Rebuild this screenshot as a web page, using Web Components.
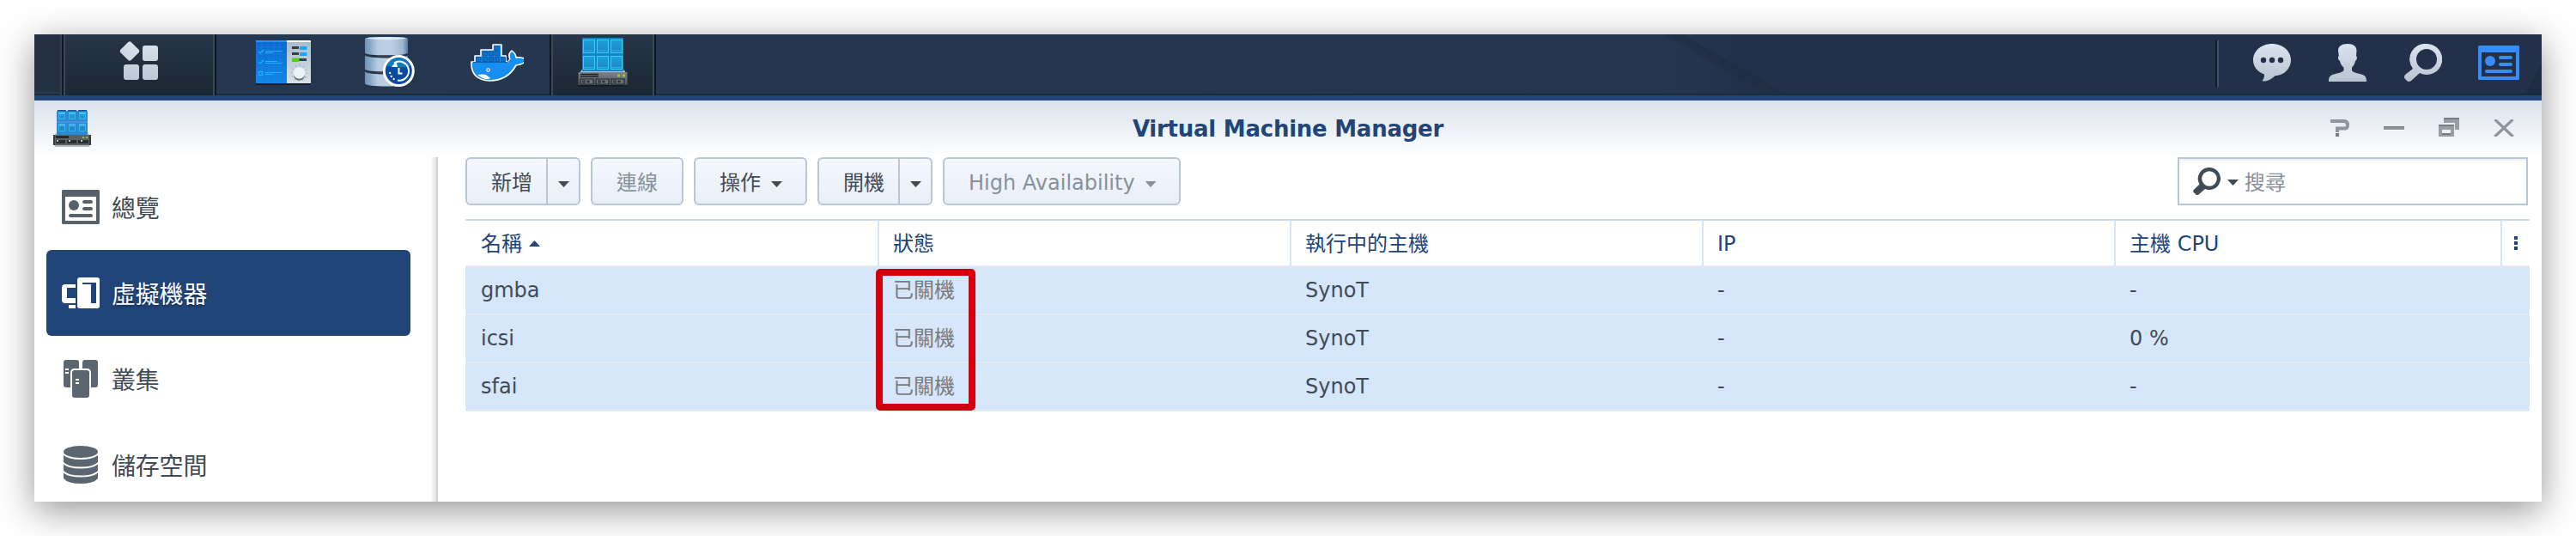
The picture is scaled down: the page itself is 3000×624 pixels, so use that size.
<!DOCTYPE html>
<html lang="zh-Hant">
<head>
<meta charset="utf-8">
<title>Virtual Machine Manager</title>
<style>
html,body{margin:0;height:624px;overflow:hidden;background:#fff}
body{font-family:"DejaVu Sans","Noto Sans CJK TC",sans-serif;font-size:24px;color:#414b55}
</style>
</head>
<body>
<vm-desktop></vm-desktop>
<script>
const cubes = `<linearGradient id="c" x2="0" y2="1"><stop stop-color="#1c9fdd"/><stop offset="1" stop-color="#2186c4"/></linearGradient>`;
const ICONS = {
  grid: [46, 46, `<defs><linearGradient id="g" gradientUnits="userSpaceOnUse" x1="0" y1="0" x2="0" y2="46"><stop stop-color="#dae4f0"/><stop offset="1" stop-color="#bcc7d4"/></linearGradient></defs>
    <g fill="url(#g)"><rect x="4.3" y="2.8" width="17.4" height="17.4" rx="2.8" transform="rotate(45 13 11.5)"/><rect x="28" y="5" width="18" height="18" rx="3"/><rect x="6" y="27" width="18" height="18" rx="3"/><rect x="28" y="27" width="18" height="18" rx="3"/></g>`],
  panel: [64, 52, `<defs><linearGradient id="b" x2="0" y2="1"><stop stop-color="#0b68cf"/><stop offset="1" stop-color="#1387e6"/></linearGradient><linearGradient id="w" x2="0" y2="1"><stop stop-color="#a9bccb"/><stop offset="1" stop-color="#dbe1e6"/></linearGradient></defs>
    <rect y="2" width="64" height="50" rx="1.5" fill="#101a28"/>
    <path d="M1 0h35v50H0V1z" fill="url(#b)"/><path d="M36 0h27l1 1v49H36z" fill="url(#w)"/>
    <path d="M0 8h35M0 16h35M0 24h35M0 32h35M0 40h35M7 2v48M14 2v48M21 2v48M28 2v48" stroke="#2a8bee" stroke-width=".7" opacity=".55"/>
    <path d="M0 1h36" stroke="#2397ff" stroke-width="2"/><path d="M36 1h28" stroke="#fff" stroke-width="2"/>
    <g fill="none" stroke="#16b8ff" stroke-width="1.2"><path d="M3 13l2 2 4-4M3 25l2 2 4-4M11 12.5h20M11 14.5h9M11 24.5h14M11 26.500h20M11 37.500h20M11 39.500h9"/><rect x="3.500" y="36.500" width="4" height="4"/></g>
    <path d="M42 8.500h8M42 15.500h8M50 22.500h9" stroke="#34404b" stroke-width="3"/>
    <g fill="#16a8f6"><rect x="51" y="7" width="8.500" height="4" rx=".8"/><rect x="51" y="14" width="8.500" height="4" rx=".8"/></g><rect x="42" y="20.500" width="8.500" height="4.500" rx=".8" fill="#58d208"/>
    <circle cx="50.500" cy="38" r="9" fill="none" stroke="#8d9aa6" stroke-width="1.600" stroke-dasharray=".8 3.910"/><circle cx="50.500" cy="40" r="6.600" fill="#5f6b76"/><circle cx="50.500" cy="38" r="6.800" fill="#eaf3fb"/>`],
  backup: [60, 60, `<defs><linearGradient id="m"><stop stop-color="#6f93b8"/><stop offset=".12" stop-color="#86a7c8"/><stop offset=".3" stop-color="#b9cbe0"/><stop offset=".6" stop-color="#bccfe2"/><stop offset=".88" stop-color="#9db8d2"/><stop offset="1" stop-color="#587c9f"/></linearGradient></defs>
    <path d="M1 2Q1 0 26 0t25 2v17.500q-2 3-25 3t-25-3z" fill="url(#m)"/><path d="M2 1.500q24 4 48 0Q44 0 26 0T2 1.500" fill="#dcecf4"/>
    <path d="M1 21.500q3 3 25 3t25-3v17q-3 3-25 3t-25-3z" fill="url(#m)"/><path d="M1 40.500q3 3 25 3t25-3v14q-3 3-25 3t-25-3z" fill="url(#m)"/>
    <path d="M1 19.500q3 2.500 25 2.500t25-2.500M1 38.500q3 2.500 25 2.500" fill="none" stroke="#27303c" stroke-width="1.500"/>
    <circle cx="40.300" cy="39.600" r="18.500" fill="#fff"/><circle cx="40.300" cy="39.600" r="15.500" fill="#094aa0"/>
    <path d="M26 33.500a15.500 15.500 0 0 1 28 0q-13 4-28 0" fill="#0f7cbc"/>
    <path d="M35 30.500a11 11 0 1 1 4 20" fill="none" stroke="#fff" stroke-width="2"/><path d="M32 35l5.500-7 1.500 7z" fill="#fff"/>
    <path d="M35.500 49.500a11 11 0 0 1-5.500-10" fill="none" stroke="#fff" stroke-width="2" stroke-dasharray="2 2.200"/><path d="M40.500 36v6.500h4" fill="none" stroke="#fff" stroke-width="2"/>`],
  docker: [62, 46, `<path d="M1 23V21h4v-7h7V7h14V1h10v13h5v6l3 1q1-2 2-3-3-6 2-10 5 4 5 8 5-1 12 2-2 6-12 7Q43 43 22 43 1 42 1 23z" fill="#168ff0" stroke="#fff" stroke-width="1.600" stroke-linejoin="round"/>
    <path d="M8 36q7-1 10 0l5 4q-5 4-15-4" fill="#fff"/>
    <g fill="#1070c7" stroke="#0b50a0" stroke-width=".8"><path d="M6.500 15.500h5.500v5H6.500zM14 15.500h5.500v5H14zM21 15.500h5.500v5H21zM28 15.500h5.500v5H28zM35.500 15.500h5v5h-5zM14 8.800h5.500v5H14zM21 8.800h5.500v5H21zM28 8.800h5.500v5H28zM28 2.500h5.500v5H28z"/></g>
    <path d="M3 21.500h38q4 0 6-3" fill="none" stroke="#0c5faf"/><circle cx="20.500" cy="30.500" r="2.200" fill="#fff"/><circle cx="20.500" cy="30.500" r="1.100" fill="#303b48"/>`],
  vm: [62, 58, `<defs>${cubes}<linearGradient id="s" x2="0" y2="1"><stop stop-color="#7c8488"/><stop offset="1" stop-color="#4c5458"/></linearGradient></defs>
    <rect x="2" y="54" width="58" height="3.500" rx="1.500" fill="#0a101a" opacity=".6"/>
    <path d="M8 36h46l4 6H4z" fill="#a9c4d0"/><rect x="7" y="1" width="48" height="39" fill="#197fd0"/>
    <g fill="url(#c)" stroke="#35d3f4"><rect x="8.500" y="3.500" width="13" height="15"/><rect x="24.500" y="3.500" width="13" height="15"/><rect x="40.500" y="3.500" width="13" height="15"/><rect x="8.500" y="22.500" width="13" height="15"/><rect x="24.500" y="22.500" width="13" height="15"/><rect x="40.500" y="22.500" width="13" height="15"/></g>
    <path d="M8 16h14M24 16h14M40 16h14M8 35.500h14M24 35.500h14M40 35.500h14" stroke="#2bc0e8" stroke-width=".8"/>
    <rect y="43" width="62" height="12" fill="#22292e"/><rect x="2.500" y="41" width="57" height="15" fill="url(#s)"/>
    <path d="M5 43.500h21M5 46h21" stroke="#1c2226" stroke-width="1.300"/><path d="M48 43.500h3v3h-3zM54 43.500h3v3h-3z" fill="#8bd200"/>
    <g fill="#697277" stroke="#23292d" stroke-width="1.200"><path d="M5 49h15v6H5zM23 49h15v6H23zM41 49h15v6H41z"/></g><path d="M7 51h4M7 53h4M12 52h4M14 50.500v3M25 51h4M25 53h4M30 52h4M32 50.500v3M43 51h4M43 53h4M48 52h4M50 50.500v3" stroke="#14191c"/>`],
  vmsmall: [44, 44, `<defs>${cubes}</defs><rect x="2" y="40" width="40" height="3" rx="1" fill="#777" opacity=".5"/><path d="M4 26h36l4 5H0z" fill="#b4c2c8"/>
    <rect x="4" y="1" width="36" height="28" rx="1" fill="#2a8bd2"/><path d="M5 .5h10M17 .5h10M29 .5h10" stroke="#1c559c" stroke-width="1.500"/>
    <g fill="url(#c)" stroke="#3cb6e8"><path d="M6.500 4.500h7v6h-7zM18.500 4.500h7v6h-7zM30.500 4.500h7v6h-7zM6.500 18.500h7v6h-7zM18.500 18.500h7v6h-7zM30.500 18.500h7v6h-7z"/></g><path d="M4 14h36" stroke="#4c8fe0" stroke-width="2"/><path d="M6 3.500h8M18 3.500h8M30 3.500h8M6 17h8M18 17h8M30 17h8" stroke="#58dcff"/>
    <rect y="29" width="44" height="12" fill="#33393c"/><rect x="2" y="29" width="40" height="12" fill="#596163"/><path d="M3 31.500h15" stroke="#111" stroke-width="2"/><path d="M34 31h2v2h-2zM38 31h2v2h-2z" fill="#8ec63a"/>
    <path d="M3 35h11v4H3zM16 35h11v4H16zM29 35h12v4H29z" fill="#272d31"/><path d="M4 35h2v2H4zM18 35h2v2h-2zM32 35h2v2h-2z" fill="#bbb"/>`],
  chat: [44, 44, `<defs><linearGradient id="g" x2="0" y2="1"><stop stop-color="#dae4f0"/><stop offset="1" stop-color="#b9c4d1"/></linearGradient></defs><path d="M22 0c12.500 0 22 8.400 22 19S35 37 25.500 37.300Q18 44.500 10.500 43.500q3-3.500 2.400-8C5 32.500 0 26.500 0 19 0 8.400 9.500 0 22 0z" fill="url(#g)"/><g fill="#223149"><circle cx="12" cy="19" r="3.200"/><circle cx="22" cy="19" r="3.200"/><circle cx="32" cy="19" r="3.200"/></g>`],
  user: [44, 44, `<defs><linearGradient id="g" x2="0" y2="1"><stop stop-color="#dae4f0"/><stop offset="1" stop-color="#b9c4d1"/></linearGradient></defs><path d="M22 0c7 0 10.500 3 10.500 8l-.5 6c2 2 .3 5-1 6-.8 4-2.500 6-4 7.500V31c2 3 6 3 11 4.500 5 1.500 6 3.500 6 8.500H0c0-5 1-7 6-8.500C11 34 15 34 17.500 31v-3.500C15.500 26 14 24 13 20c-1.500-1-3-4-1.200-6L11 8c0-5 4-8 11-8z" fill="url(#g)"/>`],
  search: [44, 44, `<defs><linearGradient id="g" x2="0" y2="1"><stop stop-color="#dae4f0"/><stop offset="1" stop-color="#b9c4d1"/></linearGradient></defs><path d="M26 0a18 18 0 1 1-8 34l-10 9q-3 2-5 0l-2-2q-2-2 0-5l9-7A18 18 0 0 1 26 0zm0 6a12 12 0 1 0 0 24 12 12 0 0 0 0-24z" fill="url(#g)"/>`],
  find: [32, 32, `<path d="M19 0a13 13 0 1 1-5 25l-7.500 6.500q-1.500 1-3 0L.7 29q-1-1.500 0-3L7.500 19.500A13 13 0 0 1 19 0zm0 4.200a8.800 8.800 0 1 0 0 17.600 8.800 8.800 0 0 0 0-17.600z" fill="#414b55"/>`],
  widget: [48, 40, `<path fill-rule="evenodd" d="M1 0h46l1 1v38l-1 1H1l-1-1V1zM4 8v28h40V8z" fill="#388cf8"/><circle cx="14" cy="18" r="6" fill="#388cf8"/><path d="M26 14h12M26 22h12M10 30h28" stroke="#388cf8" stroke-width="4" stroke-linecap="round"/>`],
  help: [22, 20, `<path d="M0 2h16q4 0 4 4.500t-4 4H8v4.500" fill="none" stroke="#8f949d" stroke-width="4"/><path d="M6 16h4v4H6z" fill="#777d88"/>`],
  min: [24, 6, `<path d="M0 1h24v4H0z" fill="#8f949d"/><path d="M0 1h24v1H0z" fill="#777d88"/><path d="M0 5.500h24" stroke="#fff"/>`],
  restore: [24, 22, `<path d="M6 0h18v14h-5V6H6z" fill="#989da6"/><path fill-rule="evenodd" d="M0 8h18v14H0zM4 14v4h10v-4z" fill="#989da6"/><path d="M6 1h18M0 9h18M4 19h10" stroke="#777d88" stroke-width="2"/>`],
  close: [24, 20, `<path d="M1.500 0l21 20M22.500 0l-21 20" stroke="#8f949d" stroke-width="3.200"/>`],
  overview: [44, 40, `<path fill-rule="evenodd" d="M1 0h42l1 1v38l-1 1H1l-1-1V1zM4 8v28h36V8z" fill="#57616b"/><circle cx="14" cy="18" r="6" fill="#57616b"/><path d="M26 14h8M26 22h8M10 30h24" stroke="#57616b" stroke-width="4" stroke-linecap="round"/>`],
  machine: [44, 36, `<path d="M4 8h12v4H6v12h10v6H4q-4 0-4-4V12q0-4 4-4zM8 32h8v4H8z" fill="#fff"/><path fill-rule="evenodd" d="M21 0h20q3 0 3 3v30q0 3-3 3H21q-3 0-3-3V3q0-3 3-3zm3 6v2h10v22h6V6z" fill="#fff"/>`],
  cluster: [40, 44, `<g fill="#5c6670"><path d="M3 0h12q3 0 3 3v7h-5q-5 0-5 5v17H3q-3 0-3-3V3q0-3 3-3zM25 0h12q3 0 3 3v26q0 3-3 3h-5V15q0-5-5-5h-5V3q0-3 3-3z"/><rect x="10" y="12" width="20" height="32" rx="3"/></g><path d="M2 11h4M2 15h4M14 23h4M14 27h4" stroke="#fff" stroke-width="2"/>`],
  storage: [40, 44, `<g fill="#5c6670"><ellipse cx="20" cy="7" rx="20" ry="7"/><path d="M0 11q6 5 20 5t20-5v8q-5 5.500-20 5.500T0 19zM0 21.500q6 5 20 5t20-5V29q-5 5.500-20 5.500T0 29zM0 31.500q6 5 20 5t20-5V38q-5 6-20 6T0 38z"/></g>`]
};
const define = (tag, css, html) => customElements.define(tag, class extends HTMLElement {
  constructor() {
    super();
    this.attachShadow({mode: "open"}).innerHTML = `<style>:host{display:block;box-sizing:border-box}*{box-sizing:border-box}${css}</style>${html}`;
  }
});
customElements.define("vm-icon", class extends HTMLElement {
  connectedCallback() {
    if (this.shadowRoot) return;
    const [w, h, body] = ICONS[this.getAttribute("name")];
    this.attachShadow({mode: "open"}).innerHTML = `<style>:host{display:block;flex:none;width:${w}px;height:${h}px}svg{display:block}</style><svg width="${w}" height="${h}" viewBox="0 0 ${w} ${h}">${body}</svg>`;
  }
});
define("vm-caret", `:host{flex:none;width:13px;height:7px;background:currentColor;clip-path:polygon(0 0,100% 0,50% 100%)}:host([up]){clip-path:polygon(0 100%,100% 100%,50% 0)}`, "");
define("vm-task", `:host{height:100%;flex:none;padding-left:var(--pl,0);padding-top:var(--pt,0)}
  :host([dark]){border-left:2px solid #10171f;border-right:2px solid #10171f;background:linear-gradient(#263547,#1b2735);box-shadow:inset 2px 0 #38475a,inset -2px 0 #38475a}`, `<slot></slot>`);
define("vm-taskbar", `:host{height:77px;flex:none;border-bottom:6px solid #214579;display:flex;background:linear-gradient(#0000 69px,#1f2a39 69px),linear-gradient(90deg,#253850 0,#24364f 1900px,#223149 1990px);position:relative}
  .edge{width:32px;border-right:2px solid #323f51;background:linear-gradient(#24303f 0,#233243 67px,#2b394b 67px 69px,#1f2a39 69px)}
  .band{position:absolute;left:1860px;top:0}.corner{position:absolute;right:0;top:0}
  .tray{margin-left:auto;display:flex;padding:11px 26px 0 0;align-items:flex-start}
  .sep{width:4px;height:54px;margin-top:-4px;margin-right:40px;background:linear-gradient(90deg,#151b25 50%,#415069 50%)}
  .tray vm-icon+vm-icon{margin-left:44px}.tray vm-icon.w{margin:2px 0 0 42px}`,
  `<svg class="band" width="183" height="71"><defs><linearGradient id="a" gradientUnits="userSpaceOnUse" x1="94" y1="47" x2="108" y2="23"><stop stop-color="#213048" stop-opacity=".55"/><stop offset="1" stop-color="#1c2b40"/></linearGradient></defs><path d="M37 0h22L183 71h-24z" fill="url(#a)" opacity=".75"/></svg>
  <svg class="corner" width="22" height="71"><path d="M22 34v35H2z" fill="#1d2c43"/></svg>
  <div class="edge"></div>
  <vm-task dark style="width:180px;--pl:64px;--pt:8px"><vm-icon name="grid"></vm-icon></vm-task>
  <vm-task style="width:126px;--pl:46px;--pt:7px"><vm-icon name="panel"></vm-icon></vm-task>
  <vm-task style="width:123px;--pl:46px;--pt:3px"><vm-icon name="backup"></vm-icon></vm-task>
  <vm-task style="width:139px;--pl:47px;--pt:11px"><vm-icon name="docker"></vm-icon></vm-task>
  <vm-task dark style="width:124px;--pl:29px;--pt:3px"><vm-icon name="vm"></vm-icon></vm-task>
  <div class="tray"><div class="sep"></div><vm-icon name="chat"></vm-icon><vm-icon name="user"></vm-icon><vm-icon name="search"></vm-icon><vm-icon class="w" name="widget"></vm-icon></div>`);
define("vm-titlebar", `:host{height:66px;flex:none;display:grid;grid-template-columns:1fr auto 1fr;background:linear-gradient(#dae2ed,#fff)}
  .logo{padding:11px 0 0 22px}.t{font-weight:700;font-size:26px;color:#214579;height:66px;line-height:66px;white-space:nowrap;letter-spacing:-.25px}
  .c{display:flex;justify-content:flex-end;padding-right:32px}`,
  `<div class="logo"><vm-icon name="vmsmall"></vm-icon></div><div class="t"><slot></slot></div>
  <div class="c"><vm-icon name="help" style="margin:22px 40px 0 0"></vm-icon><vm-icon name="min" style="margin:29px 40px 0 0"></vm-icon><vm-icon name="restore" style="margin:20px 40px 0 0"></vm-icon><vm-icon name="close" style="margin-top:22px"></vm-icon></div>`);
define("vm-nav", `:host{height:100px;display:flex;align-items:center;border-radius:6px;padding-left:18px;font-size:28px;color:#414b55;white-space:nowrap}
  :host([on]){background:#214579;color:#fff;text-shadow:0 2px 2px #0004}.i{width:44px;display:flex;justify-content:center;margin-right:14px}.l{line-height:40px;font-family:"Noto Sans CJK TC",sans-serif;font-weight:400;letter-spacing:-.2px}`,
  `<div class="i"><slot name="icon"></slot></div><div class="l"><slot></slot></div>`);
define("vm-sidebar", `:host{width:470px;flex:none;padding:8px 32px 0 14px;background:linear-gradient(90deg,#0000 462px,#f2f2f2 464px,#e4e4e4 468px,#d2d2d2 468px);overflow:hidden}`, `<slot></slot>`);
define("vm-button", `:host{height:56px;flex:none;display:flex;border:2px solid #b9c6d4;border-radius:6px;background:linear-gradient(#f4f8ff,#e9eff8);white-space:nowrap;color:#414b55}
  :host([off]){color:#87919c}.m{flex:1;display:flex;align-items:flex-start;padding:2px 0 0 28px;line-height:52px}.m vm-caret{margin:24px 0 0 12px}.d{display:none;width:38px;border-left:2px solid #b9c6d4;padding:26px 0 0 12px}
  :host([menu]) .m vm-caret{display:block}.m vm-caret{display:none}:host([split]) .d{display:block}`,
  `<div class="m"><span><slot></slot></span><vm-caret></vm-caret></div><div class="d"><vm-caret></vm-caret></div>`);
define("vm-search", `:host{width:408px;height:56px;margin-left:auto;display:flex;border:2px solid #b9c6d4;box-shadow:inset 0 2px #eff0f1;padding:10px 0 0 16px;color:#414b55}
  vm-caret{margin:14px 7px 0 8px}.p{color:#87919c;line-height:36px;height:36px}`,
  `<vm-icon name="find"></vm-icon><vm-caret></vm-caret><div class="p"><slot></slot></div>`);
define("vm-toolbar", `:host{display:flex;gap:12px;height:56px;padding-right:16px}`, `<slot></slot>`);
define("vm-row", `:host{display:grid;grid-template-columns:480px 480px 480px 480px 450px 34px;height:56px;border-bottom:2px solid #e5eaf1;background:#d6e6fb;--sep:transparent;line-height:54px;white-space:nowrap}
  :host([head]){height:54px;background:#fff;color:#214579;--sep:#d8e5f2}
  ::slotted(*){height:100%;border-left:2px solid var(--sep);padding-left:16px}::slotted(.s){color:#7c7a7a}::slotted(.sort){display:flex;align-items:flex-start;border-left-color:transparent!important;gap:8px}::slotted(.dots){padding:18px 0 0 14px!important}`, `<slot></slot>`);
define("vm-table", `:host{margin-top:16px;width:2404px;border-top:2px solid #cddbe9;position:relative}
  .sort vm-caret{margin-top:23px}
  .mark{position:absolute;left:477.5px;top:56px;width:116.500px;height:164.500px;border:8px solid #d2000f;border-radius:5px}`,
  `<vm-row head><div class="sort"><span>名稱</span><vm-caret up></vm-caret></div><div>狀態</div><div>執行中的主機</div><div>IP</div><div>主機 CPU</div><div class="dots"><svg width="4" height="16" style="display:block"><path d="M0 0h4v4H0zM0 6h4v4H0zM0 12h4v4H0z" fill="#214579"/></svg></div></vm-row>
  ${[["gmba","-"],["icsi","0 %"],["sfai","-"]].map(([n,c]) => `<vm-row><div>${n}</div><div class="s">已關機</div><div>SynoT</div><div>-</div><div>${c}</div><div></div></vm-row>`).join("")}
  <div class="mark"></div>`);
define("vm-main", `:host{flex:1;padding-left:32px}`, `<slot></slot>`);
define("vm-desktop", `:host{height:624px;padding:40px;overflow:hidden}
  .win{width:2920px;height:544px;background:#fff;box-shadow:0 10px 40px rgba(0,0,0,.42);display:flex;flex-direction:column}.body{display:flex;flex:1;min-height:0}`,
  `<div class="win"><vm-taskbar></vm-taskbar><vm-titlebar>Virtual Machine Manager</vm-titlebar>
  <div class="body"><vm-sidebar><vm-nav><vm-icon slot="icon" name="overview"></vm-icon>總覽</vm-nav><vm-nav on><vm-icon slot="icon" name="machine"></vm-icon>虛擬機器</vm-nav><vm-nav><vm-icon slot="icon" name="cluster"></vm-icon>叢集</vm-nav><vm-nav><vm-icon slot="icon" name="storage"></vm-icon>儲存空間</vm-nav></vm-sidebar>
  <vm-main><vm-toolbar><vm-button split style="width:134px">新增</vm-button><vm-button off style="width:108px">連線</vm-button><vm-button menu style="width:132px">操作</vm-button><vm-button split style="width:134px">開機</vm-button><vm-button off menu style="width:277px">High Availability</vm-button><vm-search>搜尋</vm-search></vm-toolbar><vm-table></vm-table></vm-main></div></div>`);
</script>
</body>
</html>
